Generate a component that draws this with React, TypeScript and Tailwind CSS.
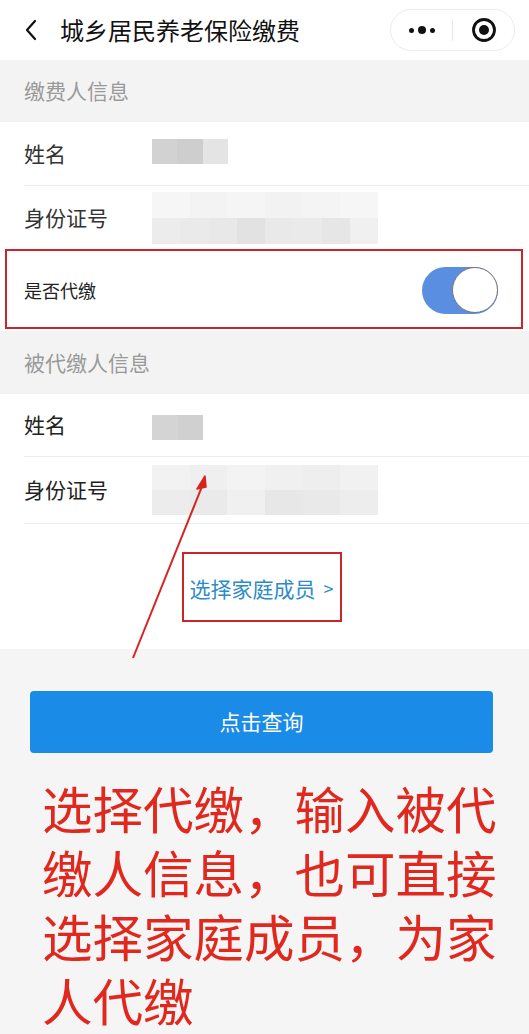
import React from "react";

const font = { fontFamily: '"Noto Sans CJK SC", "Noto Sans", sans-serif' };

function Pix({ cells, className }: { cells: string[]; className: string }) {
  return (
    <div className={`flex ${className}`}>
      {cells.map((c, i) => (
        <div key={i} className="h-full flex-1" style={{ background: c }} />
      ))}
    </div>
  );
}

export default function App() {
  return (
    <div className="relative w-[529px] h-[1034px] overflow-hidden bg-[#f5f5f5] text-[#222]" style={font}>
      {/* Nav bar */}
      <div className="flex h-[60px] items-center bg-white">
        <svg width="14" height="22" viewBox="0 0 14 22" className="ml-[24px]">
          <path d="M11 2 L3 11 L11 20" fill="none" stroke="#111" strokeWidth="2.2" strokeLinecap="round" strokeLinejoin="round" />
        </svg>
        <div className="ml-[22px] text-[24px] leading-none text-[#111]">城乡居民养老保险缴费</div>
        <div className="ml-auto mr-[14px] flex h-[42px] w-[125px] items-center rounded-full border border-[#ececec] bg-white">
          <div className="flex flex-1 items-center justify-center gap-[4px]">
            <span className="h-[5px] w-[5px] rounded-full bg-[#111]" />
            <span className="h-[8px] w-[8px] rounded-full bg-[#111]" />
            <span className="h-[5px] w-[5px] rounded-full bg-[#111]" />
          </div>
          <div className="h-[22px] w-px bg-[#e8e8e8]" />
          <div className="flex flex-1 items-center justify-center">
            <svg width="26" height="26" viewBox="0 0 26 26">
              <circle cx="13" cy="13" r="10.5" fill="none" stroke="#111" strokeWidth="2.8" />
              <circle cx="13" cy="13" r="5" fill="#111" />
            </svg>
          </div>
        </div>
      </div>

      {/* Section 1 header */}
      <div className="flex h-[62px] items-center bg-[#f3f3f3] px-[24px] text-[21px] text-[#9a9a9a]">缴费人信息</div>

      {/* Rows */}
      <div className="bg-white">
        <div className="ml-[24px] flex h-[64px] items-center border-b border-[#ececec]">
          <div className="w-[128px] text-[21px] text-[#333]">姓名</div>
          <Pix className="mt-[-4px] h-[25px] w-[76px]" cells={["#d2d2d2", "#cecece", "#e4e4e4"]} />
        </div>
        <div className="ml-[24px] flex h-[63px] items-center">
          <div className="w-[128px] text-[21px] text-[#333]">身份证号</div>
          <div className="flex h-[52px] w-[226px] flex-col">
            <Pix className="h-[26px] w-full" cells={["#f6f6f6", "#f3f3f3", "#f5f5f5", "#f2f2f2", "#f4f4f4", "#f6f6f6"]} />
            <Pix className="h-[26px] w-full" cells={["#ececec", "#eaeaea", "#e8e8e8", "#e2e2e2", "#e9e9e9", "#eaeaea", "#e6e6e6", "#f0f0f0"]} />
          </div>
        </div>
      </div>

      {/* Toggle row */}
      <div className="relative flex h-[82px] items-center bg-white pl-[24px] pr-[31px]">
        <div className="text-[18px] text-[#222]">是否代缴</div>
        <div className="ml-auto flex h-[47px] w-[76px] items-center justify-end rounded-full bg-[#5a8ee0]">
          <div className="h-[46px] w-[46px] rounded-full border border-[#777] bg-white" />
        </div>
        <div className="pointer-events-none absolute left-[5px] right-[6px] top-0 bottom-[2px] border-2 border-[#c8262b]" />
      </div>

      {/* Section 2 header */}
      <div className="flex h-[63px] items-center bg-[#f3f3f3] px-[24px] text-[21px] text-[#9a9a9a]">被代缴人信息</div>

      <div className="bg-white">
        <div className="ml-[24px] flex h-[63px] items-center border-b border-[#ececec]">
          <div className="w-[128px] text-[21px] text-[#222]">姓名</div>
          <Pix className="mt-[4px] h-[25px] w-[51px]" cells={["#d4d4d4", "#d0d0d0"]} />
        </div>
        <div className="ml-[24px] flex h-[67px] items-center border-b border-[#ececec]">
          <div className="w-[128px] text-[21px] text-[#222]">身份证号</div>
          <div className="flex h-[50px] w-[226px] flex-col">
            <Pix className="h-[25px] w-full" cells={["#f2f2f2", "#efefef", "#f3f3f3", "#f0f0f0", "#eeeeee", "#f1f1f1"]} />
            <Pix className="h-[25px] w-full" cells={["#ececec", "#eaeaea", "#f0f0f0", "#e7e7e7", "#e9e9e9", "#ededed"]} />
          </div>
        </div>
        <div className="flex h-[125px] items-center justify-center pr-[6px]">
          <div className="flex h-[70px] w-[160px] items-center justify-center border-2 border-[#c8262b] pt-[4px] text-[21px] text-[#2d8bc9]">
            选择家庭成员 <span className="ml-[8px] text-[18px]">&gt;</span>
          </div>
        </div>
      </div>

      {/* Bottom area */}
      <div className="px-[30px] pt-[42px]">
        <div className="flex h-[62px] w-[463px] items-center justify-center rounded-[4px] bg-[#1a8be6] text-[21px] text-white">
          点击查询
        </div>
        <div className="mt-[22px] ml-[12px] w-[470px] text-[50.5px] leading-[64px] text-[#e0281f]">
          选择代缴，输入被代<br />缴人信息，也可直接<br />选择家庭成员，为家<br />人代缴
        </div>
      </div>

      {/* Annotation arrow */}
      <svg className="pointer-events-none absolute left-0 top-0" width="529" height="1034">
        <line x1="133" y1="658" x2="203" y2="484" stroke="#d8231d" strokeWidth="2" />
        <path d="M205 476 L197 489 L206 487 Z" fill="#d8231d" stroke="#d8231d" strokeWidth="1.5" strokeLinejoin="round" />
      </svg>
    </div>
  );
}
